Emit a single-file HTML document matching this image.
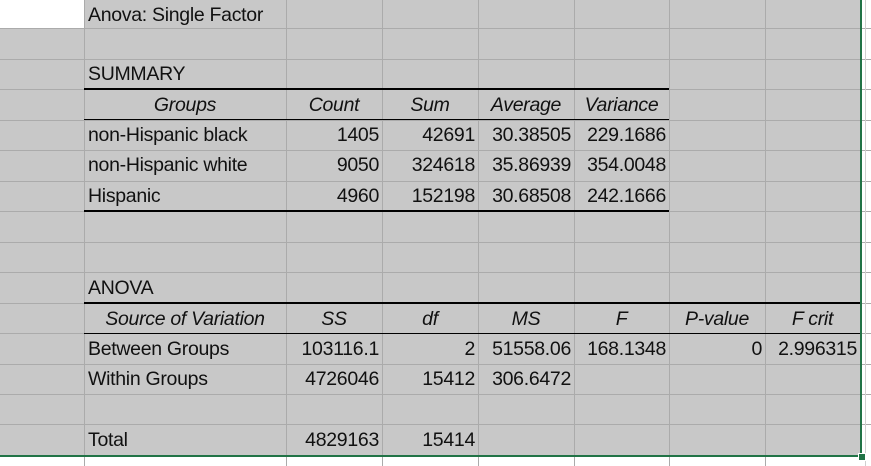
<!DOCTYPE html>
<html><head><style>
body{margin:0;width:871px;height:466px;overflow:hidden;background:#fff;font-family:"Liberation Sans",sans-serif;font-size:19.5px;color:#111;position:relative}
.a{position:absolute}
.h{position:absolute;height:1px;background:#ababab}
.v{position:absolute;width:1px;background:#ababab}
.t{position:absolute;line-height:31px;white-space:nowrap;letter-spacing:-0.3px}
.r{text-align:right}
.c{text-align:center}
i{font-style:italic}
</style></head><body>
<div class="a" style="left:0;top:0;width:861px;height:455px;background:#c8c8c8"></div>
<div class="a" style="left:0;top:0;width:84px;height:28px;background:#fff"></div>
<div class="h" style="left:0;top:28px;width:871px"></div>
<div class="h" style="left:0;top:59px;width:871px"></div>
<div class="h" style="left:0;top:89px;width:871px"></div>
<div class="h" style="left:0;top:120px;width:871px"></div>
<div class="h" style="left:0;top:150px;width:871px"></div>
<div class="h" style="left:0;top:181px;width:871px"></div>
<div class="h" style="left:0;top:211px;width:871px"></div>
<div class="h" style="left:0;top:242px;width:871px"></div>
<div class="h" style="left:0;top:272px;width:871px"></div>
<div class="h" style="left:0;top:303px;width:871px"></div>
<div class="h" style="left:0;top:333px;width:871px"></div>
<div class="h" style="left:0;top:364px;width:871px"></div>
<div class="h" style="left:0;top:394px;width:871px"></div>
<div class="h" style="left:0;top:424px;width:871px"></div>
<div class="v" style="left:84px;top:0;height:466px"></div>
<div class="v" style="left:286px;top:0;height:466px"></div>
<div class="v" style="left:382px;top:0;height:466px"></div>
<div class="v" style="left:478px;top:0;height:466px"></div>
<div class="v" style="left:574px;top:0;height:466px"></div>
<div class="v" style="left:669px;top:0;height:466px"></div>
<div class="v" style="left:765px;top:0;height:466px"></div>
<div class="v" style="left:865px;top:0;height:466px;background:#d0d0d0"></div>
<div class="a" style="left:84px;top:88px;width:585px;height:2px;background:#000"></div>
<div class="a" style="left:84px;top:119px;width:585px;height:1px;background:#000"></div>
<div class="a" style="left:84px;top:210px;width:585px;height:2px;background:#000"></div>
<div class="a" style="left:84px;top:302px;width:776px;height:2px;background:#000"></div>
<div class="a" style="left:84px;top:333px;width:776px;height:1px;background:#000"></div>
<div class="a" style="left:860px;top:0;width:2px;height:457px;background:#217346"></div>
<div class="a" style="left:0;top:455px;width:862px;height:2px;background:#217346"></div>
<div class="a" style="left:858px;top:453px;width:6px;height:6px;background:#217346;border:1px solid #fff"></div>
<div class="t" style="left:88px;top:0">Anova: Single Factor</div>
<div class="t" style="left:88px;top:59px">SUMMARY</div>
<div class="t c" style="left:84px;top:90px;width:202px"><i>Groups</i></div>
<div class="t c" style="left:286px;top:90px;width:96px"><i>Count</i></div>
<div class="t c" style="left:382px;top:90px;width:96px"><i>Sum</i></div>
<div class="t c" style="left:478px;top:90px;width:96px"><i>Average</i></div>
<div class="t c" style="left:574px;top:90px;width:95px"><i>Variance</i></div>
<div class="t" style="left:88px;top:120px">non-Hispanic black</div>
<div class="t" style="left:88px;top:150px">non-Hispanic white</div>
<div class="t" style="left:88px;top:181px">Hispanic</div>
<div class="t r" style="left:276px;top:120px;width:103px">1405</div>
<div class="t r" style="left:276px;top:150px;width:103px">9050</div>
<div class="t r" style="left:276px;top:181px;width:103px">4960</div>
<div class="t r" style="left:372px;top:120px;width:103px">42691</div>
<div class="t r" style="left:372px;top:150px;width:103px">324618</div>
<div class="t r" style="left:372px;top:181px;width:103px">152198</div>
<div class="t r" style="left:468px;top:120px;width:103px">30.38505</div>
<div class="t r" style="left:468px;top:150px;width:103px">35.86939</div>
<div class="t r" style="left:468px;top:181px;width:103px">30.68508</div>
<div class="t r" style="left:564px;top:120px;width:102px">229.1686</div>
<div class="t r" style="left:564px;top:150px;width:102px">354.0048</div>
<div class="t r" style="left:564px;top:181px;width:102px">242.1666</div>
<div class="t" style="left:88px;top:273px">ANOVA</div>
<div class="t c" style="left:84px;top:304px;width:202px"><i>Source of Variation</i></div>
<div class="t c" style="left:286px;top:304px;width:96px"><i>SS</i></div>
<div class="t c" style="left:382px;top:304px;width:96px"><i>df</i></div>
<div class="t c" style="left:478px;top:304px;width:96px"><i>MS</i></div>
<div class="t c" style="left:574px;top:304px;width:95px"><i>F</i></div>
<div class="t c" style="left:669px;top:304px;width:96px"><i>P-value</i></div>
<div class="t c" style="left:765px;top:304px;width:95px"><i>F crit</i></div>
<div class="t" style="left:88px;top:334px">Between Groups</div>
<div class="t" style="left:88px;top:364px">Within Groups</div>
<div class="t" style="left:88px;top:425px">Total</div>
<div class="t r" style="left:276px;top:334px;width:103px">103116.1</div>
<div class="t r" style="left:276px;top:364px;width:103px">4726046</div>
<div class="t r" style="left:276px;top:425px;width:103px">4829163</div>
<div class="t r" style="left:372px;top:334px;width:103px">2</div>
<div class="t r" style="left:372px;top:364px;width:103px">15412</div>
<div class="t r" style="left:372px;top:425px;width:103px">15414</div>
<div class="t r" style="left:468px;top:334px;width:103px">51558.06</div>
<div class="t r" style="left:468px;top:364px;width:103px">306.6472</div>
<div class="t r" style="left:564px;top:334px;width:102px">168.1348</div>
<div class="t r" style="left:659px;top:334px;width:103px">0</div>
<div class="t r" style="left:755px;top:334px;width:102px">2.996315</div>
</body></html>
